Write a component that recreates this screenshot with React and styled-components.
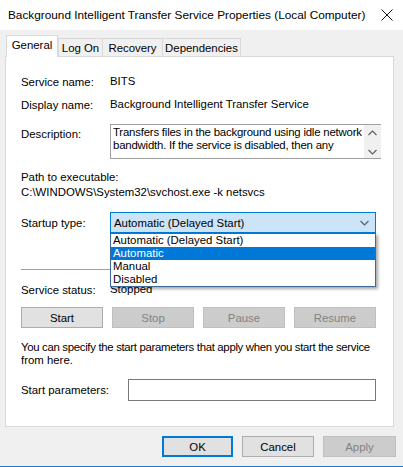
import styled, { createGlobalStyle } from "styled-components";

const GlobalStyle = createGlobalStyle`
  html, body {
    margin: 0;
    padding: 0;
    background: #f0f0f0;
  }
  body {
    font-family: "Liberation Sans", Arial, sans-serif;
    font-size: 11.4px;
    color: #000;
  }
`;

const Window = styled.div`
  width: 403px;
  height: 467px;
  display: flex;
  flex-direction: column;
  background: #f0f0f0;
  border-bottom: 1px solid #1979ca;
  box-sizing: border-box;
  overflow: hidden;
`;

const TitleBar = styled.div`
  height: 30px;
  flex: none;
  background: #fff;
  display: flex;
  align-items: center;
  justify-content: space-between;
  padding: 0 10px 0 8px;
  font-size: 11.8px;
`;

const Body = styled.div`
  flex: 1;
  display: flex;
  flex-direction: column;
  padding: 6px 7px 0 5px;
`;

const TabRow = styled.div`
  display: flex;
  align-items: flex-end;
  height: 21px;
  padding-left: 1px;
  position: relative;
  z-index: 1;
  margin-bottom: -1px;
`;

const Tab = styled.div`
  box-sizing: border-box;
  height: ${(p) => (p.$active ? "22px" : "19px")};
  width: ${(p) => p.$w}px;
  border: 1px solid #d9d9d9;
  border-bottom: ${(p) => (p.$active ? "none" : "1px solid #d9d9d9")};
  background: ${(p) => (p.$active ? "#fff" : "#f0f0f0")};
  display: flex;
  align-items: center;
  justify-content: center;
  padding-bottom: ${(p) => (p.$active ? "3px" : "0")};
  margin-right: ${(p) => (p.$active ? "0" : "-1px")};
`;

const Panel = styled.div`
  height: 371px;
  margin-right: 2px;
  box-sizing: border-box;
  background: #fff;
  border: 1px solid #d9d9d9;
  padding: 17px 17px 0 15px;
  display: flex;
  flex-direction: column;
  position: relative;
`;

const Row = styled.div`
  display: flex;
  align-items: ${(p) => p.$align || "center"};
  margin-top: ${(p) => p.$mt || 0}px;
  min-height: 15px;
`;

const Label = styled.div`
  width: ${(p) => p.$w || 89}px;
  flex: none;
  padding-top: ${(p) => p.$pt || 0}px;
`;

const Text = styled.div`
  line-height: ${(p) => p.$lh || 15}px;
  margin-top: ${(p) => p.$mt || 0}px;
  letter-spacing: ${(p) => p.$ls || 0}px;
  white-space: nowrap;
`;

const DescBox = styled.div`
  flex: 1;
  height: 35px;
  box-sizing: border-box;
  border: 1px solid #a0a0a0;
  border-right: none;
  display: flex;
`;

const DescText = styled.div`
  flex: 1;
  line-height: 13px;
  padding: 1px 2px 0;
  letter-spacing: -0.2px;
`;

const DescLine = styled.div`
  white-space: nowrap;
`;

const ScrollBar = styled.div`
  width: 17px;
  background: #f0f0f0;
  display: flex;
  flex-direction: column;
  align-items: center;
  justify-content: space-between;
  padding: 5px 0 3px;
  box-sizing: border-box;
`;

const ComboWrap = styled.div`
  flex: 1;
  position: relative;
`;

const Combo = styled.div`
  height: 21px;
  box-sizing: border-box;
  border: 1px solid #0078d7;
  background: #cce4f7;
  display: flex;
  align-items: center;
  justify-content: space-between;
  padding: 0 6px 0 3px;
`;

const DropList = styled.div`
  position: absolute;
  top: 21px;
  left: 0;
  right: 0;
  background: #fff;
  border: 1px solid #3c6a96;
  box-shadow: 2px 2px 3px rgba(0, 0, 0, 0.35);
  z-index: 5;
`;

const DropItem = styled.div`
  height: 13px;
  line-height: 13px;
  padding-left: 2px;
  background: ${(p) => (p.$sel ? "#0078d7" : "#fff")};
  color: ${(p) => (p.$sel ? "#fff" : "#000")};
`;

const Separator = styled.div`
  height: 1px;
  background: #a0a0a0;
  margin-top: 36px;
`;

const ButtonRow = styled.div`
  display: flex;
  gap: ${(p) => p.$gap || 9}px;
  margin-top: ${(p) => p.$mt || 0}px;
  justify-content: ${(p) => p.$justify || "flex-start"};
`;

const Button = styled.div`
  width: ${(p) => p.$w || 82}px;
  height: 21px;
  box-sizing: border-box;
  display: flex;
  align-items: center;
  justify-content: center;
  background: ${(p) => (p.$disabled ? "#cccccc" : "#e1e1e1")};
  border: ${(p) =>
    p.$default ? "2px solid #0078d7" : p.$disabled ? "1px solid #bfbfbf" : "1px solid #adadad"};
  color: ${(p) => (p.$disabled ? "#838383" : "#000")};
`;

const InputBox = styled.div`
  flex: 1;
  height: 22px;
  box-sizing: border-box;
  border: 1px solid #7a7a7a;
`;

const Footer = styled.div`
  margin-top: 9px;
`;

const Chevron = ({ up, color = "#606060" }) => (
  <svg width="9" height="6" viewBox="0 0 9 6">
    <path
      d={up ? "M0.5 5 L4.5 1 L8.5 5" : "M0.5 1 L4.5 5 L8.5 1"}
      fill="none"
      stroke={color}
      strokeWidth="1.2"
    />
  </svg>
);

const CloseIcon = () => (
  <svg width="12" height="12" viewBox="0 0 12 12">
    <path d="M0.5 0.5 L11.5 11.5 M11.5 0.5 L0.5 11.5" stroke="#111" strokeWidth="1" fill="none" />
  </svg>
);

const App = () => {
  return (
    <>
      <GlobalStyle />
      <Window>
        <TitleBar>
          <span>Background Intelligent Transfer Service Properties (Local Computer)</span>
          <CloseIcon />
        </TitleBar>
        <Body>
          <TabRow>
            <Tab $active $w={52}>General</Tab>
            <Tab $w={45}>Log On</Tab>
            <Tab $w={61}>Recovery</Tab>
            <Tab $w={79}>Dependencies</Tab>
          </TabRow>
          <Panel>
            <Row>
              <Label>Service name:</Label>
              <Text>BITS</Text>
            </Row>
            <Row $mt={8}>
              <Label>Display name:</Label>
              <Text>Background Intelligent Transfer Service</Text>
            </Row>
            <Row $mt={12} $align="flex-start">
              <Label $pt={4}>Description:</Label>
              <DescBox>
                <DescText>
                  <DescLine>Transfers files in the background using idle network</DescLine>
                  <DescLine>bandwidth. If the service is disabled, then any</DescLine>
                </DescText>
                <ScrollBar>
                  <Chevron up />
                  <Chevron />
                </ScrollBar>
              </DescBox>
            </Row>
            <Text $mt={11}>Path to executable:</Text>
            <Text>C:\WINDOWS\System32\svchost.exe -k netsvcs</Text>
            <Row $mt={12}>
              <Label>Startup type:</Label>
              <ComboWrap>
                <Combo>
                  <span>Automatic (Delayed Start)</span>
                  <Chevron />
                </Combo>
                <DropList>
                  <DropItem>Automatic (Delayed Start)</DropItem>
                  <DropItem $sel>Automatic</DropItem>
                  <DropItem>Manual</DropItem>
                  <DropItem>Disabled</DropItem>
                </DropList>
              </ComboWrap>
            </Row>
            <Separator />
            <Row $mt={12}>
              <Label>Service status:</Label>
              <Text>Stopped</Text>
            </Row>
            <ButtonRow $mt={10}>
              <Button>Start</Button>
              <Button $disabled>Stop</Button>
              <Button $disabled>Pause</Button>
              <Button $disabled>Resume</Button>
            </ButtonRow>
            <Text $mt={13} $lh={13} $ls={-0.32}>
              You can specify the start parameters that apply when you start the service
            </Text>
            <Text $lh={13}>from here.</Text>
            <Row $mt={12}>
              <Label $w={107}>Start parameters:</Label>
              <InputBox />
            </Row>
          </Panel>
          <Footer>
            <ButtonRow $justify="flex-end">
              <Button $default $w={71}>OK</Button>
              <Button $w={72}>Cancel</Button>
              <Button $disabled $w={73}>Apply</Button>
            </ButtonRow>
          </Footer>
        </Body>
      </Window>
    </>
  );
};

export default App;
